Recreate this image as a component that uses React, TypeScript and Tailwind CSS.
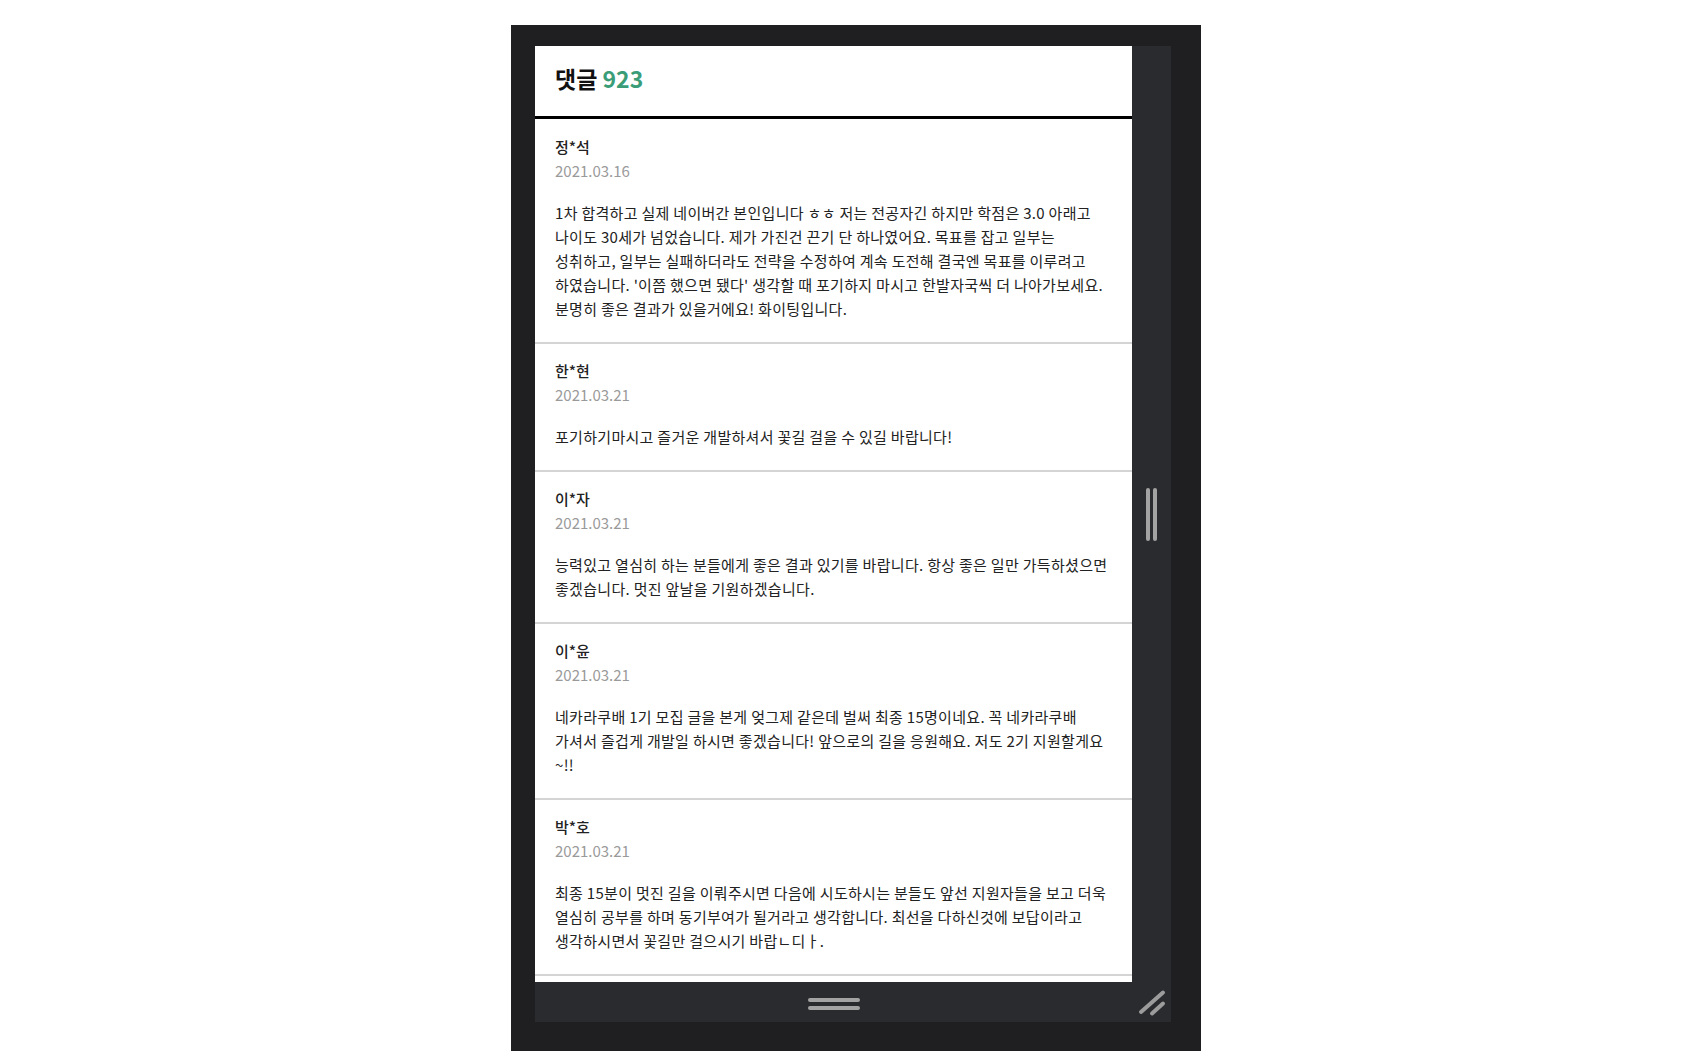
import React from 'react'

type Comment = {
    name: string
    date: string
    lines: string[]
}

const comments: Comment[] = [
    {
        name: '정*석',
        date: '2021.03.16',
        lines: [
            '1차 합격하고 실제 네이버간 본인입니다 ㅎㅎ 저는 전공자긴 하지만 학점은 3.0 아래고',
            '나이도 30세가 넘었습니다. 제가 가진건 끈기 단 하나였어요. 목표를 잡고 일부는',
            '성취하고, 일부는 실패하더라도 전략을 수정하여 계속 도전해 결국엔 목표를 이루려고',
            "하였습니다. '이쯤 했으면 됐다' 생각할 때 포기하지 마시고 한발자국씩 더 나아가보세요.",
            '분명히 좋은 결과가 있을거에요! 화이팅입니다.'
        ]
    },
    {
        name: '한*현',
        date: '2021.03.21',
        lines: ['포기하기마시고 즐거운 개발하셔서 꽃길 걸을 수 있길 바랍니다!']
    },
    {
        name: '이*자',
        date: '2021.03.21',
        lines: [
            '능력있고 열심히 하는 분들에게 좋은 결과 있기를 바랍니다. 항상 좋은 일만 가득하셨으면',
            '좋겠습니다. 멋진 앞날을 기원하겠습니다.'
        ]
    },
    {
        name: '이*윤',
        date: '2021.03.21',
        lines: [
            '네카라쿠배 1기 모집 글을 본게 엊그제 같은데 벌써 최종 15명이네요. 꼭 네카라쿠배',
            '가셔서 즐겁게 개발일 하시면 좋겠습니다! 앞으로의 길을 응원해요. 저도 2기 지원할게요',
            '~!!'
        ]
    },
    {
        name: '박*호',
        date: '2021.03.21',
        lines: [
            '최종 15분이 멋진 길을 이뤄주시면 다음에 시도하시는 분들도 앞선 지원자들을 보고 더욱',
            '열심히 공부를 하며 동기부여가 될거라고 생각합니다. 최선을 다하신것에 보답이라고',
            '생각하시면서 꽃길만 걸으시기 바랍ㄴ디ㅏ.'
        ]
    }
]

function CommentItem({ comment }: { comment: Comment }) {
    return (
        <li className="border-b-2 border-[#d4d4d4] px-5 pt-[15px] first:pt-4 pb-[21px]">
            <p className="text-[15px] leading-6 font-medium text-[#222]">{comment.name}</p>
            <p className="text-[15px] leading-6 text-[#9a9a9a]">{comment.date}</p>
            <div className="mt-[18px] text-[15px] leading-6 tracking-[0.3px] text-[#222]">
                {comment.lines.map((line, i) => (
                    <p key={i} className="whitespace-nowrap">{line}</p>
                ))}
            </div>
        </li>
    )
}

export default function App() {
    return (
        <div className="min-h-screen bg-white pl-[511px] pt-[25px] font-['Noto_Sans_CJK_KR','Noto_Sans',sans-serif]">
            <div className="w-[690px] h-[1026px] bg-[#1f1f21] pl-6 pt-[21px]">
                <div className="grid grid-cols-[597px_39px] grid-rows-[936px_40px] w-[636px] bg-[#2a2b2f]">
                    {/* comment panel */}
                    <div className="bg-white overflow-hidden">
                        <div className="h-[73px] flex items-center px-5 pb-[6px] border-b-[3px] border-black">
                            <h1 className="text-[23px] font-bold text-[#111]">
                                댓글 <span className="text-[#3a9d78]">923</span>
                            </h1>
                        </div>
                        <ul>
                            {comments.map((c, i) => (
                                <CommentItem key={i} comment={c} />
                            ))}
                        </ul>
                    </div>

                    {/* vertical scroll handle */}
                    <div className="flex items-center justify-center">
                        <div className="flex gap-[3px]">
                            <span className="w-1 h-[53px] rounded-full bg-[#a3a3a3]" />
                            <span className="w-1 h-[53px] rounded-full bg-[#a3a3a3]" />
                        </div>
                    </div>

                    {/* horizontal drag handle */}
                    <div className="flex items-center justify-center pt-[4px]">
                        <div className="flex flex-col gap-1">
                            <span className="w-[52px] h-1 rounded-full bg-[#a3a3a3]" />
                            <span className="w-[52px] h-1 rounded-full bg-[#a3a3a3]" />
                        </div>
                    </div>

                    {/* resize grip */}
                    <div>
                        <svg width="39" height="40" viewBox="0 0 39 40">
                            <line x1="9" y1="30" x2="31" y2="10.5" stroke="#9c9c9c" strokeWidth="4" strokeLinecap="round" />
                            <line x1="20" y1="31.5" x2="31" y2="21.5" stroke="#9c9c9c" strokeWidth="4" strokeLinecap="round" />
                        </svg>
                    </div>
                </div>
            </div>
        </div>
    )
}
